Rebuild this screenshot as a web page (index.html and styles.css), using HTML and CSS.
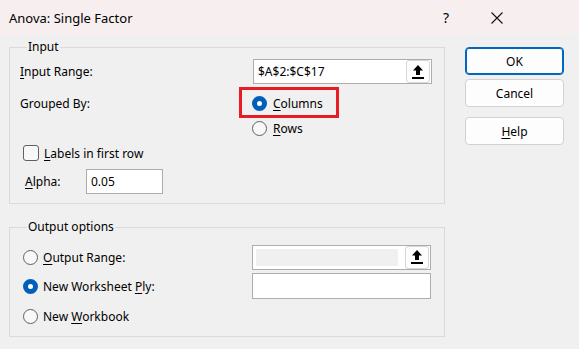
FILE: index.html
```html
<!DOCTYPE html>
<html>
<head>
<meta charset="utf-8">
<link rel="stylesheet" href="styles.css">
</head>
<body>
<div class="dialog">
  <div class="titlebar">
    <span class="title">Anova: Single Factor</span>
    <span class="help-q">?</span>
    <svg class="close" width="12" height="12" viewBox="0 0 12 12"><path d="M0.5 0.5 L11.5 11.5 M11.5 0.5 L0.5 11.5" stroke="#111" stroke-width="1.1" fill="none"/></svg>
  </div>
  <div class="main">
    <div class="left">
      <fieldset class="group group-input">
        <legend>Input</legend>
        <div class="row row-range">
          <span class="label"><u>I</u>nput Range:</span>
          <div class="refbox">
            <span class="refval">$A$2:$C$17</span>
            <span class="pick"><svg width="12" height="14" viewBox="0 0 12 14"><path d="M6 0 L11 5.5 L8 5.5 L8 10 L4 10 L4 5.5 L1 5.5 Z" fill="#000"/><rect x="0" y="12" width="12" height="2" fill="#000"/></svg></span>
          </div>
        </div>
        <div class="row row-group">
          <span class="label">Grouped By:</span>
          <div class="radio-wrap">
            <span class="radio checked"></span><span class="rtext"><u>C</u>olumns</span>
            <span class="highlight"></span>
          </div>
        </div>
        <div class="row row-rows">
          <span class="label"></span>
          <div class="radio-wrap">
            <span class="radio"></span><span class="rtext"><u>R</u>ows</span>
          </div>
        </div>
        <div class="row row-check">
          <span class="checkbox"></span><span class="ctext"><u>L</u>abels in first row</span>
        </div>
        <div class="row row-alpha">
          <span class="alpha-label"><u>A</u>lpha:</span>
          <div class="alpha-box">0.05</div>
        </div>
      </fieldset>
      <fieldset class="group group-output">
        <legend>Output options</legend>
        <div class="row orow orow-1">
          <span class="radio"></span><span class="otext"><u>O</u>utput Range:</span>
          <div class="refbox">
            <span class="disabled-fill"></span>
            <span class="pick"><svg width="12" height="14" viewBox="0 0 12 14"><path d="M6 0 L11 5.5 L8 5.5 L8 10 L4 10 L4 5.5 L1 5.5 Z" fill="#000"/><rect x="0" y="12" width="12" height="2" fill="#000"/></svg></span>
          </div>
        </div>
        <div class="row orow orow-2">
          <span class="radio checked"></span><span class="otext">New Worksheet <u>P</u>ly:</span>
          <div class="plainbox"></div>
        </div>
        <div class="row orow orow-3">
          <span class="radio"></span><span class="otext">New <u>W</u>orkbook</span>
        </div>
      </fieldset>
    </div>
    <div class="buttons">
      <button class="btn btn-default">OK</button>
      <button class="btn">Cancel</button>
      <button class="btn btn-help"><u>H</u>elp</button>
    </div>
  </div>
</div>
</body>
</html>
```
FILE: styles.css
```css
html, body {
  margin: 0;
  padding: 0;
}
body {
  width: 579px;
  height: 349px;
  background: #f0f0f0;
  font-family: "Noto Sans", "Open Sans", sans-serif;
  font-size: 12px;
  color: #000;
  overflow: hidden;
}
u {
  text-decoration: underline;
  text-underline-offset: 2px;
}
.titlebar {
  height: 35px;
  background: #f6eeef;
  display: flex;
  align-items: center;
  padding-left: 9px;
  box-sizing: border-box;
}
.title {
  font-size: 13px;
  flex: 1;
}
.help-q {
  font-size: 14px;
  width: 12px;
  margin-right: 36px;
}
.titlebar .close {
  margin-right: 76px;
}
.main {
  display: flex;
  padding-top: 4px;
}
.left {
  margin-left: 9px;
  width: 436px;
}
.group {
  margin: 0;
  border: 1px solid #dadada;
  padding: 0 0 0 10px;
  box-sizing: border-box;
  width: 436px;
  position: relative;
}
.group legend {
  padding: 0 1px;
  margin-left: 7px;
  line-height: 16px;
  font-size: 12px;
}
.group-input {
  height: 165px;
}
.group-output {
  margin-top: 15px;
  height: 118px;
}
.row {
  display: flex;
  align-items: center;
}
.label {
  width: 233px;
}
.row-range {
  margin-top: 4px;
  height: 25px;
}
.refbox {
  width: 179px;
  height: 25px;
  box-sizing: border-box;
  border: 1px solid #adadad;
  background: #fff;
  display: flex;
  align-items: center;
  position: relative;
}
.refval {
  padding-left: 4px;
  flex: 1;
}
.pick {
  width: 24px;
  height: 23px;
  box-sizing: border-box;
  border: 1px solid #d6d6d6;
  border-radius: 3px;
  background: #fdfdfd;
  display: flex;
  align-items: center;
  justify-content: center;
  margin-right: 1px;
  margin-left: auto;
}
.row-group {
  margin-top: 7px;
  height: 25px;
}
.row-rows {
  height: 25px;
}
.radio-wrap {
  display: flex;
  align-items: center;
  position: relative;
  margin-left: -1px;
}
.radio {
  width: 15px;
  height: 15px;
  box-sizing: border-box;
  border: 1px solid #606060;
  border-radius: 50%;
  background: #f8f8f8;
  flex: none;
}
.radio.checked {
  border: 5px solid #005fb8;
  background: #fff;
}
.rtext {
  margin-left: 6px;
}
.highlight {
  position: absolute;
  left: -13px;
  top: -8px;
  width: 100px;
  height: 31px;
  box-sizing: border-box;
  border: 3px solid #e81c24;
}
.row-check {
  height: 24px;
  padding-left: 3px;
}
.checkbox {
  width: 16px;
  height: 16px;
  box-sizing: border-box;
  border: 1px solid #606060;
  border-radius: 3px;
  background: #f8f8f8;
}
.ctext {
  margin-left: 5px;
}
.row-alpha {
  margin-top: 4px;
  height: 25px;
  padding-left: 5px;
}
.alpha-label {
  width: 61px;
}
.alpha-box {
  width: 77px;
  height: 25px;
  box-sizing: border-box;
  border: 1px solid #adadad;
  background: #fff;
  padding-left: 4px;
  line-height: 23px;
}
.orow {
  padding-left: 3px;
}
.orow-1 {
  margin-top: 9px;
  height: 26px;
}
.orow-2 {
  margin-top: 3px;
  height: 26px;
}
.orow-3 {
  margin-top: 3px;
  height: 28px;
}
.otext {
  width: 209px;
  margin-left: 5px;
}
.disabled-fill {
  position: absolute;
  left: 3px;
  top: 3px;
  width: 142px;
  height: 17px;
  background: #f0f0f0;
}
.plainbox {
  width: 179px;
  height: 26px;
  box-sizing: border-box;
  border: 1px solid #adadad;
  background: #fff;
}
.buttons {
  margin-left: 20px;
  margin-top: 8px;
  display: flex;
  flex-direction: column;
  width: 99px;
}
.btn {
  font-family: inherit;
  font-size: 12px;
  color: #000;
  width: 99px;
  height: 28px;
  box-sizing: border-box;
  background: #fdfdfd;
  border: 1px solid #d2d2d2;
  border-radius: 4px;
  padding: 0;
  margin: 0 0 4px 0;
}
.btn-default {
  border: 1px solid #0067c0;
  box-shadow: inset 0 0 0 1px #0067c0;
}
.btn-help {
  margin-top: 6px;
}
```
